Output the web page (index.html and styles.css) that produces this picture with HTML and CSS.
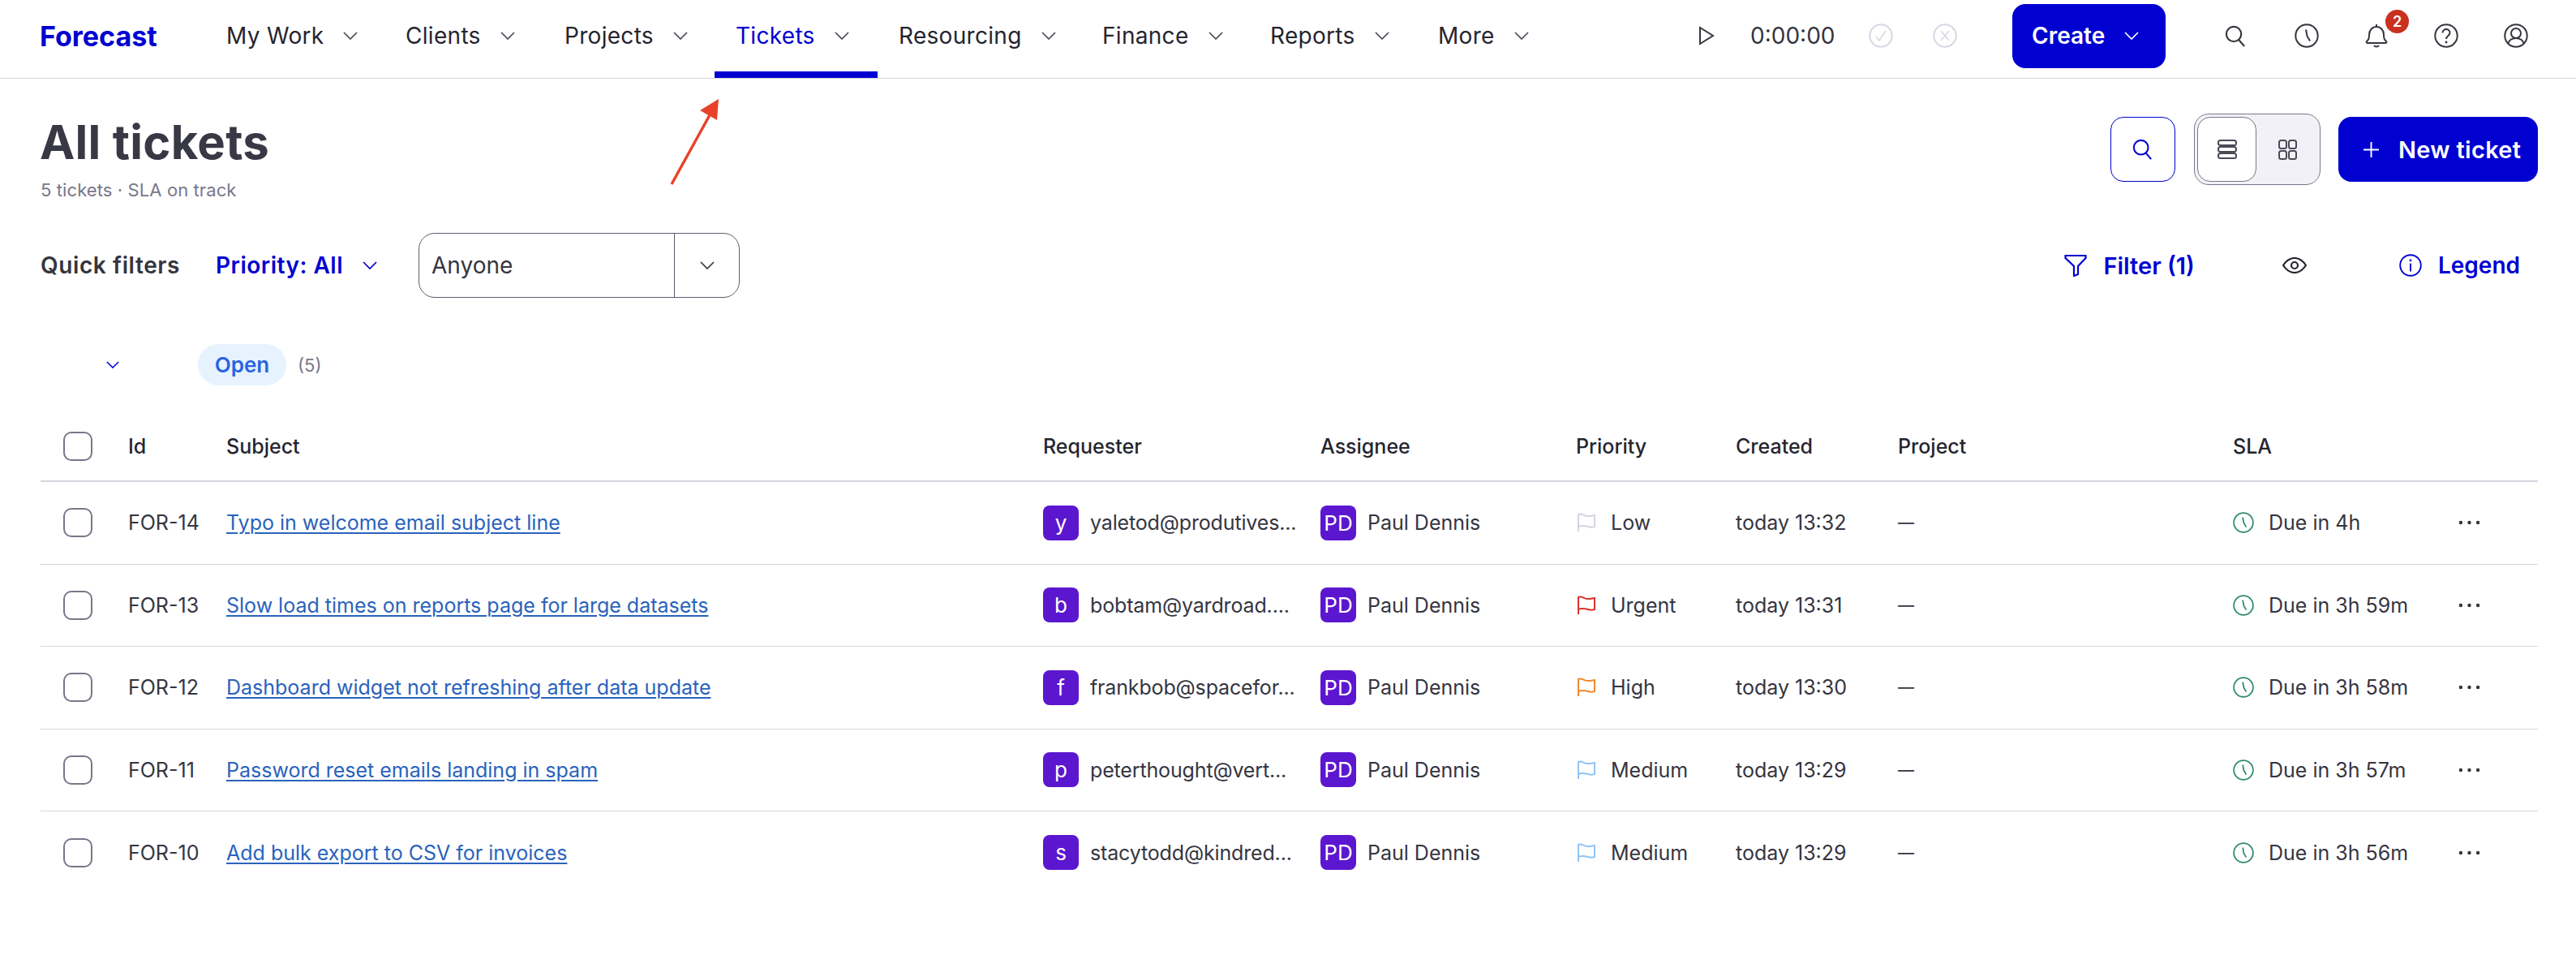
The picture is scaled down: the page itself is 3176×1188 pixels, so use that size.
FILE: index.html
```html
<!DOCTYPE html>
<html lang="en">
<head>
    <meta charset="UTF-8">
    <title>All tickets - Forecast</title>
    <link rel="stylesheet" href="styles.css">
</head>
<body>
    <svg class="sprite" width="0" height="0">
        <symbol id="chev" viewBox="0 0 18 10"><path d="M1 1l8 8 8-8" fill="none" stroke="currentColor" stroke-width="1.7"/></symbol>
        <symbol id="search" viewBox="0 0 28 28"><circle cx="11.5" cy="11.5" r="9.5" fill="none" stroke="currentColor" stroke-width="2.2"/><path d="M18 19l7 8" fill="none" stroke="currentColor" stroke-width="2.2"/></symbol>
        <symbol id="clock" viewBox="0 0 30 30"><circle cx="15" cy="15" r="13.7" fill="none" stroke="currentColor" stroke-width="2"/><path d="M14 7.5l1.5 8 3.5 6" fill="none" stroke="currentColor" stroke-width="2"/></symbol>
        <symbol id="flag" viewBox="0 0 24 24"><path d="M2 23V2c5-2 8 3 13 2 3 0 5-1 7-1v14c-3 1-5 1-8 0-4-1-8-2-12 0" fill="none" stroke="currentColor" stroke-width="2"/></symbol>
        <symbol id="dots" viewBox="0 0 28 6"><circle cx="3" cy="3" r="2.3"/><circle cx="14" cy="3" r="2.3"/><circle cx="25" cy="3" r="2.3"/></symbol>
    </svg>

    <header class="topbar">
        <div class="logo">Forecast</div>
        <nav class="menu">
            <a class="menu-item">My Work<svg class="chev"><use href="#chev"/></svg></a>
            <a class="menu-item">Clients<svg class="chev"><use href="#chev"/></svg></a>
            <a class="menu-item">Projects<svg class="chev"><use href="#chev"/></svg></a>
            <a class="menu-item active">Tickets<svg class="chev"><use href="#chev"/></svg></a>
            <a class="menu-item">Resourcing<svg class="chev"><use href="#chev"/></svg></a>
            <a class="menu-item">Finance<svg class="chev"><use href="#chev"/></svg></a>
            <a class="menu-item">Reports<svg class="chev"><use href="#chev"/></svg></a>
            <a class="menu-item">More<svg class="chev"><use href="#chev"/></svg></a>
        </nav>
        <div class="timer">
            <svg class="play" viewBox="0 0 20 24"><path d="M2 2l16 10L2 22z" fill="none" stroke="currentColor" stroke-width="2"/></svg>
            <span class="time">0:00:00</span>
            <svg class="timer-btn" viewBox="0 0 30 30"><circle cx="15" cy="15" r="13.7" fill="none" stroke="currentColor" stroke-width="2"/><path d="M9 16l4 5 8-12" fill="none" stroke="currentColor" stroke-width="1.5"/></svg>
            <svg class="timer-btn" viewBox="0 0 30 30"><circle cx="15" cy="15" r="13.7" fill="none" stroke="currentColor" stroke-width="2"/><path d="M10 9l10 12M20 9L10 21" fill="none" stroke="currentColor" stroke-width="1.5"/></svg>
        </div>
        <button class="create-btn">Create<svg class="chev"><use href="#chev"/></svg></button>
        <div class="top-icons">
            <svg class="top-icon top-search"><use href="#search"/></svg>
            <svg class="top-icon"><use href="#clock"/></svg>
            <span class="bell">
                <svg class="top-icon" viewBox="0 0 30 30"><path d="M15 1v3M6 14c0-6 4-10 9-10s9 4 9 10c0 5 1 6 3 8 1 1 0 2-1 2H4c-1 0-2-1-1-2 2-2 3-3 3-8zM12 27c1 2 5 2 6 0" fill="none" stroke="currentColor" stroke-width="2"/></svg>
                <span class="badge">2</span>
            </span>
            <svg class="top-icon" viewBox="0 0 30 30"><circle cx="15" cy="15" r="13.7" fill="none" stroke="currentColor" stroke-width="2"/><path d="M10.5 11.5c0-6 9-6 9 0 0 3.500-4.500 3.500-4.500 7.500" fill="none" stroke="currentColor" stroke-width="2"/><circle cx="15" cy="23" r="1.400" fill="currentColor"/></svg>
            <svg class="top-icon" viewBox="0 0 30 30"><circle cx="15" cy="15" r="13.7" fill="none" stroke="currentColor" stroke-width="2"/><circle cx="15" cy="12" r="6" fill="none" stroke="currentColor" stroke-width="2"/><path d="M5 25c2-6 6-7 10-7s8 1 10 7" fill="none" stroke="currentColor" stroke-width="2"/></svg>
        </div>
    </header>

    <svg class="arrow" viewBox="0 0 70 115"><path d="M6 109L54 22" fill="none" stroke="#e8432a" stroke-width="3.500"/><path d="M64 4L62 30 41 18z" fill="#e8432a"/></svg>

    <main class="page">
        <section class="page-head">
            <div class="title-block">
                <h1>All tickets</h1>
                <p class="subtitle">5 tickets · SLA on track</p>
            </div>
            <div class="head-actions">
                <button class="search-btn"><svg class="icon-md"><use href="#search"/></svg></button>
                <div class="view-toggle">
                    <span class="view-opt selected">
                        <svg class="icon-md" viewBox="0 0 26 26"><rect x="2" y="2" width="22" height="6" rx="2.500"/><rect x="2" y="10" width="22" height="6" rx="2.500"/><rect x="2" y="18" width="22" height="6" rx="2.500"/></svg>
                    </span>
                    <span class="view-opt">
                        <svg class="icon-md" viewBox="0 0 26 26"><rect x="3" y="2" width="9" height="10" rx="2.500"/><rect x="15" y="2" width="9" height="10" rx="2.500"/><rect x="3" y="15" width="9" height="10" rx="2.500"/><rect x="15" y="15" width="9" height="10" rx="2.500"/></svg>
                    </span>
                </div>
                <button class="new-btn">
                    <svg class="plus" viewBox="0 0 20 20"><path d="M10 0v20M0 10h20" stroke="currentColor" stroke-width="2"/></svg>New ticket
                </button>
            </div>
        </section>

        <section class="filters">
            <span class="quick-label">Quick filters</span>
            <a class="priority-filter">Priority: All<svg class="chev"><use href="#chev"/></svg></a>
            <div class="select-box">
                <span class="select-value">Anyone</span>
                <span class="select-arrow"><svg class="chev"><use href="#chev"/></svg></span>
            </div>
            <div class="filter-actions">
                <a class="filter-link filter-one">
                    <svg class="icon-lg" viewBox="0 0 28 28"><path d="M1.500 2h25v3L17 15v10l-5 2V15L1.500 5z" fill="none" stroke="currentColor" stroke-width="2.200"/></svg>Filter (1)
                </a>
                <svg class="eye" viewBox="0 0 30 20"><path d="M1 10c4-6 9-9 14-9s10 3 14 9c-4 6-9 9-14 9S5 16 1 10z" fill="none" stroke="currentColor" stroke-width="2.200"/><circle cx="15" cy="10" r="4" fill="none" stroke="currentColor" stroke-width="2.200"/></svg>
                <a class="filter-link legend">
                    <svg class="icon-lg" viewBox="0 0 30 30"><circle cx="15" cy="15" r="13.7" fill="none" stroke="currentColor" stroke-width="2"/><path d="M15 12.500V23" stroke="currentColor" stroke-width="2.200"/><circle cx="15" cy="8.500" r="1.500" fill="currentColor"/></svg>Legend
                </a>
            </div>
        </section>

        <section class="group-row">
            <svg class="chev group-chev"><use href="#chev"/></svg>
            <span class="status-pill">Open</span>
            <span class="count">(5)</span>
        </section>

        <section class="tickets">
            <div class="row head-row">
                <span class="checkbox"></span>
                <span>Id</span>
                <span>Subject</span>
                <span>Requester</span>
                <span>Assignee</span>
                <span>Priority</span>
                <span>Created</span>
                <span>Project</span>
                <span>SLA</span>
                <span></span>
            </div>

            <div class="row">
                <span class="checkbox"></span>
                <span>FOR-14</span>
                <a class="subject">Typo in welcome email subject line</a>
                <span class="person"><span class="avatar">y</span><span class="email">yaletod@produtives...</span></span>
                <span class="person"><span class="avatar">PD</span>Paul Dennis</span>
                <span class="prio"><svg class="flag low"><use href="#flag"/></svg>Low</span>
                <span>today 13:32</span>
                <span class="dash">—</span>
                <span class="sla"><svg class="sla-clock"><use href="#clock"/></svg>Due in 4h</span>
                <svg class="more"><use href="#dots"/></svg>
            </div>
            <div class="row">
                <span class="checkbox"></span>
                <span>FOR-13</span>
                <a class="subject">Slow load times on reports page for large datasets</a>
                <span class="person"><span class="avatar">b</span><span class="email">bobtam@yardroad....</span></span>
                <span class="person"><span class="avatar">PD</span>Paul Dennis</span>
                <span class="prio"><svg class="flag urgent"><use href="#flag"/></svg>Urgent</span>
                <span>today 13:31</span>
                <span class="dash">—</span>
                <span class="sla"><svg class="sla-clock"><use href="#clock"/></svg>Due in 3h 59m</span>
                <svg class="more"><use href="#dots"/></svg>
            </div>
            <div class="row">
                <span class="checkbox"></span>
                <span>FOR-12</span>
                <a class="subject">Dashboard widget not refreshing after data update</a>
                <span class="person"><span class="avatar">f</span><span class="email">frankbob@spacefor...</span></span>
                <span class="person"><span class="avatar">PD</span>Paul Dennis</span>
                <span class="prio"><svg class="flag high"><use href="#flag"/></svg>High</span>
                <span>today 13:30</span>
                <span class="dash">—</span>
                <span class="sla"><svg class="sla-clock"><use href="#clock"/></svg>Due in 3h 58m</span>
                <svg class="more"><use href="#dots"/></svg>
            </div>
            <div class="row">
                <span class="checkbox"></span>
                <span>FOR-11</span>
                <a class="subject">Password reset emails landing in spam</a>
                <span class="person"><span class="avatar">p</span><span class="email">peterthought@vert...</span></span>
                <span class="person"><span class="avatar">PD</span>Paul Dennis</span>
                <span class="prio"><svg class="flag medium"><use href="#flag"/></svg>Medium</span>
                <span>today 13:29</span>
                <span class="dash">—</span>
                <span class="sla"><svg class="sla-clock"><use href="#clock"/></svg>Due in 3h 57m</span>
                <svg class="more"><use href="#dots"/></svg>
            </div>
            <div class="row last">
                <span class="checkbox"></span>
                <span>FOR-10</span>
                <a class="subject">Add bulk export to CSV for invoices</a>
                <span class="person"><span class="avatar">s</span><span class="email">stacytodd@kindred...</span></span>
                <span class="person"><span class="avatar">PD</span>Paul Dennis</span>
                <span class="prio"><svg class="flag medium"><use href="#flag"/></svg>Medium</span>
                <span>today 13:29</span>
                <span class="dash">—</span>
                <span class="sla"><svg class="sla-clock"><use href="#clock"/></svg>Due in 3h 56m</span>
                <svg class="more"><use href="#dots"/></svg>
            </div>
        </section>
    </main>
</body>
</html>
```

FILE: styles.css
```css
* {
    margin: 0;
    padding: 0;
    box-sizing: border-box;
}

html, body {
    height: 100%;
    overflow: hidden;
}

body {
    position: relative;
    background-color: white;
    color: #35353f;
    font-family: Inter, "Liberation Sans", sans-serif;
    font-size: 25px;
}

.sprite {
    position: absolute;
}

.chev {
    width: 18px;
    height: 10px;
    flex: none;
}

/* top bar */
.topbar {
    display: flex;
    align-items: center;
    height: 97px;
    padding-bottom: 8px;
    border-bottom: 1px solid #d5d4e0;
}

.logo {
    width: 253px;
    padding-left: 49px;
    color: #0000d1;
    font-size: 34px;
    font-weight: 700;
}

.menu {
    display: grid;
    grid-template-columns: 221px 196px 211px 201px 251px 207px 207px 200px;
    align-self: stretch;
    margin-bottom: -8px;
    font-size: 28px;
    letter-spacing: 0.3px;
    color: #25252f;
}

.menu-item {
    display: flex;
    align-items: center;
    gap: 24px;
    padding: 0 0 8px 26px;
}

.menu-item .chev {
    color: #4a4a58;
}

.menu-item.active {
    color: #0000d1;
    border-bottom: 8px solid #0000d1;
    padding-bottom: 0;
}

.timer {
    display: flex;
    align-items: center;
    margin-left: 147px;
}

.play {
    width: 20px;
    height: 24px;
}

.time {
    margin-left: 44px;
    width: 146px;
    font-size: 28px;
    color: #35353f;
}

.timer-btn {
    width: 30px;
    height: 30px;
    color: #d8d7e3;
    margin-right: 49px;
}

.create-btn {
    display: flex;
    align-items: center;
    gap: 24px;
    width: 189px;
    height: 79px;
    margin-left: 19px;
    padding-left: 24px;
    border: none;
    border-radius: 16px;
    background-color: #0000d1;
    color: white;
    font-family: inherit;
    font-size: 28px;
    font-weight: 600;
}

.top-icons {
    display: flex;
    align-items: center;
    gap: 56px;
    margin-left: 73px;
    color: #35353f;
}

.top-icon {
    width: 30px;
    height: 30px;
}

.top-search {
    width: 27px;
    height: 27px;
    margin-right: 3px;
}

.bell {
    position: relative;
    display: flex;
}

.badge {
    position: absolute;
    top: -17px;
    left: 26px;
    width: 29px;
    height: 29px;
    border-radius: 50%;
    background-color: #c9301f;
    color: white;
    font-size: 18px;
    font-weight: 600;
    line-height: 29px;
    text-align: center;
}

/* annotation drawn over the page */
.arrow {
    position: absolute;
    top: 118px;
    left: 822px;
    width: 70px;
    height: 115px;
}

/* page */
.page {
    padding: 43px 47px 0 50px;
}

.page-head {
    display: flex;
    justify-content: space-between;
    height: 108px;
}

.title-block {
    margin-left: -1px;
}

h1 {
    font-size: 58px;
    font-weight: 700;
    line-height: 70px;
    color: #393945;
    letter-spacing: 0.3px;
}

.subtitle {
    margin-top: 11px;
    margin-left: 1px;
    font-size: 22px;
    letter-spacing: 0.1px;
    color: #77778a;
}

.head-actions {
    display: flex;
    align-items: flex-start;
}

.search-btn {
    display: flex;
    align-items: center;
    justify-content: center;
    width: 80px;
    height: 80px;
    margin-top: 4px;
    border: 1.5px solid #0000d1;
    border-radius: 16px;
    background-color: white;
    color: #0000d1;
}

.icon-md {
    width: 26px;
    height: 26px;
}

.view-toggle {
    display: flex;
    width: 156px;
    height: 88px;
    margin-left: 23px;
    padding: 3px;
    border: 1.5px solid #77778a;
    border-radius: 18px;
    background-color: #f3f1f8;
}

.view-opt {
    display: flex;
    align-items: center;
    justify-content: center;
    flex: 1;
}

.view-opt.selected {
    flex: none;
    width: 73px;
    border: 1.5px solid #77778a;
    border-radius: 16px;
    background-color: white;
}

.view-opt svg {
    fill: none;
    stroke: #4a4a58;
    stroke-width: 2;
}

.new-btn {
    display: flex;
    align-items: center;
    width: 246px;
    height: 80px;
    margin-top: 4px;
    margin-left: 22px;
    padding-left: 31px;
    border: none;
    border-radius: 16px;
    background-color: #0000d1;
    color: white;
    font-family: inherit;
    font-size: 29px;
    font-weight: 600;
    letter-spacing: 0.3px;
}

.plus {
    width: 19px;
    height: 19px;
    margin-right: 24px;
}

/* filters */
.filters {
    display: flex;
    align-items: center;
    height: 80px;
    margin-top: 39px;
}

.quick-label {
    width: 216px;
    font-size: 28px;
    font-weight: 600;
    letter-spacing: 0.6px;
}

.priority-filter {
    display: flex;
    align-items: center;
    gap: 24px;
    width: 250px;
    color: #0000d1;
    font-size: 28px;
    font-weight: 600;
    letter-spacing: 0.5px;
}

.select-box {
    display: flex;
    width: 396px;
    height: 80px;
    border: 1px solid #5e5e6e;
    border-radius: 20px;
}

.select-value {
    display: flex;
    align-items: center;
    width: 315px;
    padding-left: 15px;
    border-right: 1px solid #5e5e6e;
    font-size: 28px;
}

.select-arrow {
    display: flex;
    align-items: center;
    justify-content: center;
    flex: 1;
}

.filter-actions {
    display: flex;
    align-items: center;
    margin-left: auto;
    margin-right: 22px;
}

.filter-link {
    display: flex;
    align-items: center;
    gap: 20px;
    color: #0000d1;
    font-size: 28px;
    font-weight: 600;
}

.filter-one {
    font-size: 29px;
}

.icon-lg {
    width: 28px;
    height: 28px;
}

.eye {
    width: 30px;
    height: 20px;
    margin-left: 108px;
    margin-right: 114px;
    color: #25252f;
}

/* group header */
.group-row {
    display: flex;
    align-items: center;
    height: 51px;
    margin-top: 57px;
}

.group-chev {
    width: 16px;
    height: 9px;
    margin-left: 81px;
    color: #0000d1;
}

.status-pill {
    display: flex;
    align-items: center;
    justify-content: center;
    width: 109px;
    height: 51px;
    margin-left: 97px;
    border-radius: 26px;
    background-color: #e6f3ff;
    color: #2a63e0;
    font-size: 26px;
    font-weight: 600;
}

.count {
    margin-left: 14px;
    font-size: 22px;
    color: #77778a;
}

/* table */
.tickets {
    margin-top: 33px;
}

.row {
    display: grid;
    grid-template-columns: 108px 121px 1007px 342px 315px 197px 200px 413px 278px 1fr;
    align-items: center;
    height: 101.5px;
    border-bottom: 1px solid #d5d4e0;
    white-space: nowrap;
}

.head-row {
    height: 86px;
    border-bottom-width: 2px;
    font-weight: 500;
    color: #25252f;
}

.row.last {
    border-bottom: none;
}

.checkbox {
    display: block;
    width: 36px;
    height: 36px;
    margin-left: 28px;
    border: 2px solid #77778a;
    border-radius: 10px;
    background-color: white;
}

.subject {
    color: #2a63bc;
    text-decoration: underline;
    text-decoration-thickness: 2px;
    text-underline-offset: 3px;
}

.person {
    display: flex;
    align-items: center;
    gap: 14px;
}

.email {
    letter-spacing: -0.15px;
}

.avatar {
    display: flex;
    align-items: center;
    justify-content: center;
    width: 44px;
    height: 43px;
    border-radius: 8px;
    background-color: #5b17cf;
    color: white;
    font-size: 26px;
}

.prio {
    display: flex;
    align-items: center;
    gap: 18px;
}

.flag {
    width: 24px;
    height: 24px;
    margin-left: 1px;
}

.flag.low {
    color: #d5d4e0;
}

.flag.urgent {
    color: #d8342a;
}

.flag.high {
    color: #ee8a2c;
}

.flag.medium {
    color: #8fc4f5;
}

.dash {
    font-size: 20px;
}

.sla {
    display: flex;
    align-items: center;
    gap: 18px;
}

.sla-clock {
    width: 26px;
    height: 26px;
    color: #2e8b66;
}

.more {
    width: 27px;
    height: 6px;
    fill: #35353f;
}
```
